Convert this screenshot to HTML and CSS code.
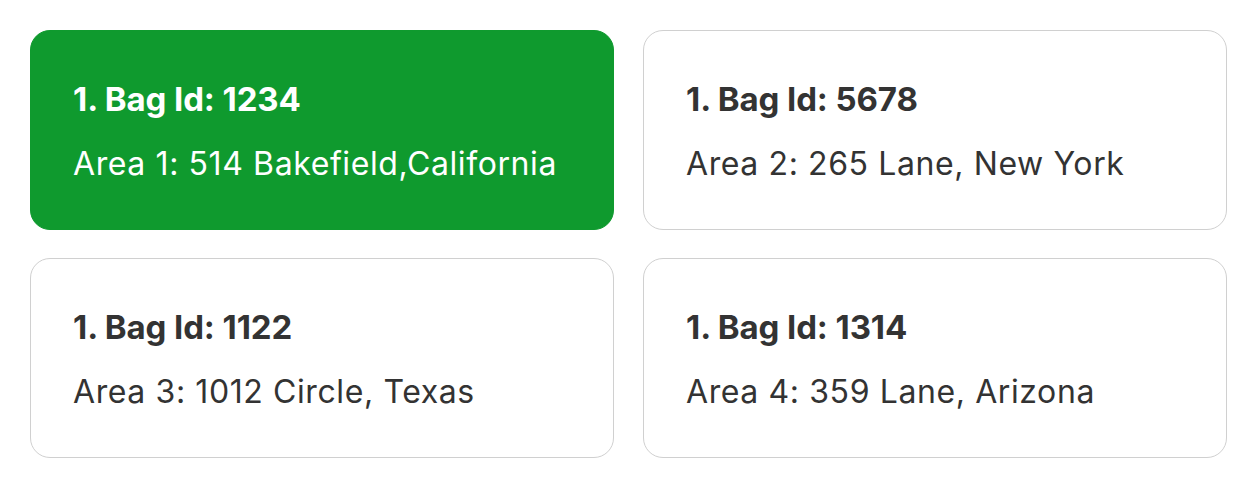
FILE: index.html
```html
<!DOCTYPE html>
<html lang="en">
<head>
    <meta charset="UTF-8">
    <meta name="viewport" content="width=device-width, initial-scale=1.0">
    <title>Bags</title>
    <link rel="stylesheet" href="styles.css">
</head>
<body>
    <div class="bag-grid">
        <div class="bag-card active">
            <div class="bag-title">1. Bag Id: 1234</div>
            <div class="bag-area">Area 1: 514 Bakefield,California</div>
        </div>
        <div class="bag-card">
            <div class="bag-title">1. Bag Id: 5678</div>
            <div class="bag-area">Area 2: 265 Lane, New York</div>
        </div>
        <div class="bag-card">
            <div class="bag-title">1. Bag Id: 1122</div>
            <div class="bag-area">Area 3: 1012 Circle, Texas</div>
        </div>
        <div class="bag-card">
            <div class="bag-title">1. Bag Id: 1314</div>
            <div class="bag-area">Area 4: 359 Lane, Arizona</div>
        </div>
    </div>
</body>
</html>
```

FILE: styles.css
```css
body {
    margin: 0;
    padding: 30px;
    background: #fff;
    font-family: 'Inter', 'Noto Sans', sans-serif;
    color: #333;
}

.bag-grid {
    display: grid;
    grid-template-columns: 1fr 1fr;
    column-gap: 29px;
    row-gap: 28px;
}

.bag-card {
    box-sizing: border-box;
    height: 200px;
    padding: 48px 42px 0;
    border: 1px solid #d0d0d0;
    border-radius: 20px;
    background: #fff;
}

.bag-card.active {
    background: #0f9a2e;
    border-color: #0f9a2e;
    color: #fff;
}

.bag-title {
    font-size: 33px;
    font-weight: 700;
    line-height: 40px;
    letter-spacing: -0.1px;
}

.bag-area {
    margin-top: 25px;
    font-size: 32px;
    line-height: 40px;
    letter-spacing: 0.6px;
}
```
